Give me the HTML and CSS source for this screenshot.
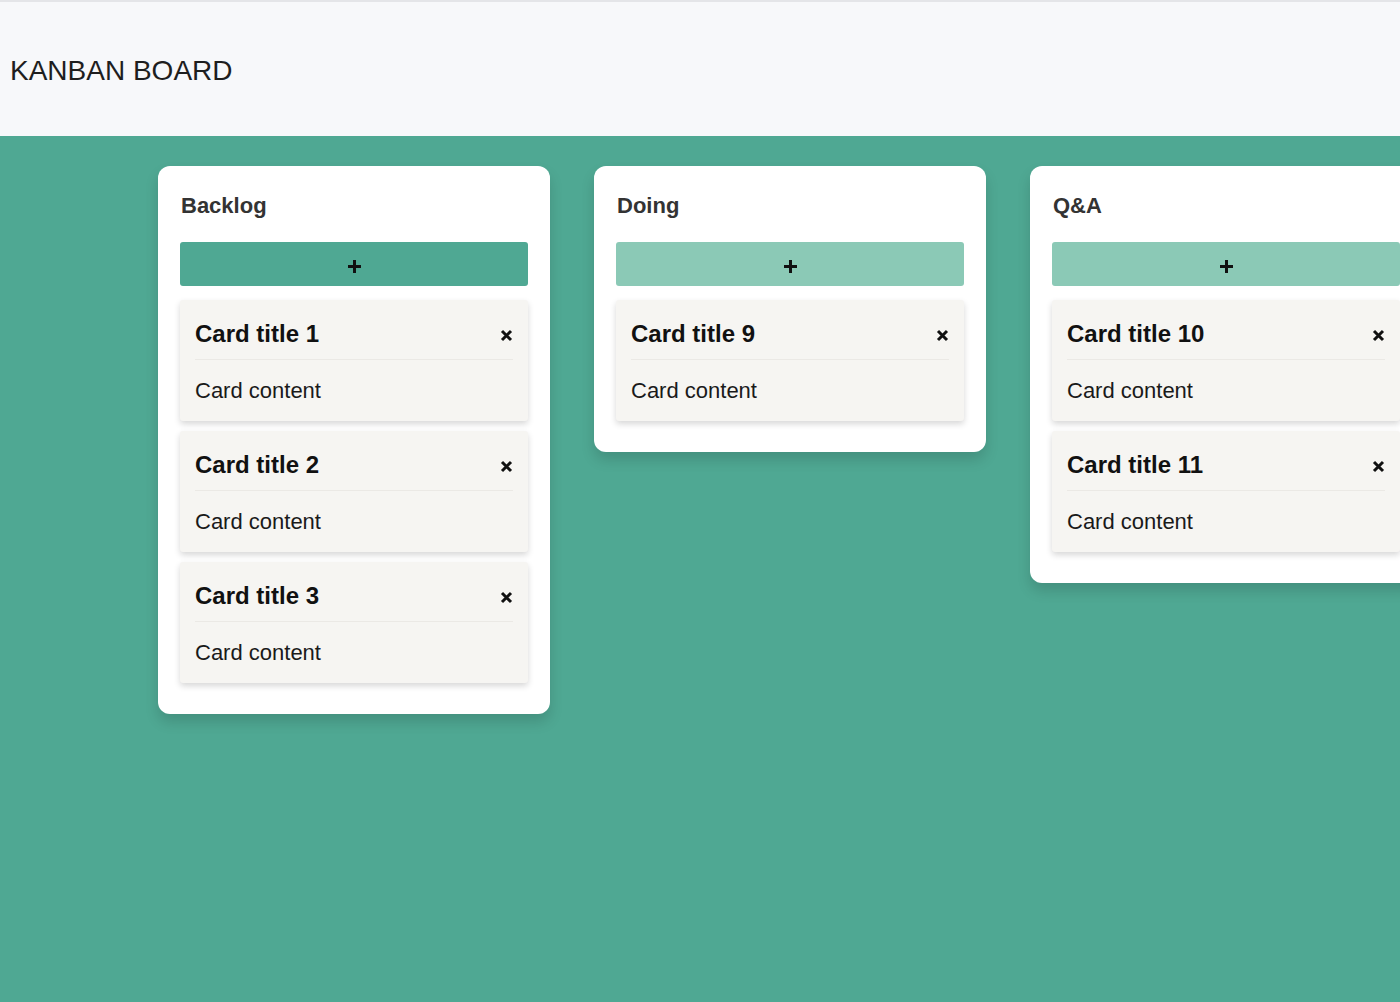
FILE: index.html
```html
<!DOCTYPE html>
<html lang="en">
<head>
<meta charset="utf-8">
<title>Kanban Board</title>
<link rel="stylesheet" href="styles.css">
</head>
<body>
<header class="topbar">
  <h1 class="brand">KANBAN BOARD</h1>
</header>
<main class="board">
  <section class="column">
    <h2 class="column-title">Backlog</h2>
    <button class="add-btn add-btn--active" aria-label="Add card"><svg class="plus" width="15" height="15" viewBox="0 0 15 15"><path d="M7.5 1v13M1 7.5h13" stroke="#111" stroke-width="3"/></svg></button>
    <div class="cards">
      <article class="card">
        <div class="card-head"><span class="card-title">Card title 1</span><svg class="close" width="13" height="13" viewBox="0 0 13 13"><path d="M2 2l9 9M11 2l-9 9" stroke="#111" stroke-width="3"/></svg></div>
        <p class="card-body">Card content</p>
      </article>
      <article class="card">
        <div class="card-head"><span class="card-title">Card title 2</span><svg class="close" width="13" height="13" viewBox="0 0 13 13"><path d="M2 2l9 9M11 2l-9 9" stroke="#111" stroke-width="3"/></svg></div>
        <p class="card-body">Card content</p>
      </article>
      <article class="card">
        <div class="card-head"><span class="card-title">Card title 3</span><svg class="close" width="13" height="13" viewBox="0 0 13 13"><path d="M2 2l9 9M11 2l-9 9" stroke="#111" stroke-width="3"/></svg></div>
        <p class="card-body">Card content</p>
      </article>
    </div>
  </section>
  <section class="column">
    <h2 class="column-title">Doing</h2>
    <button class="add-btn" aria-label="Add card"><svg class="plus" width="15" height="15" viewBox="0 0 15 15"><path d="M7.5 1v13M1 7.5h13" stroke="#111" stroke-width="3"/></svg></button>
    <div class="cards">
      <article class="card">
        <div class="card-head"><span class="card-title">Card title 9</span><svg class="close" width="13" height="13" viewBox="0 0 13 13"><path d="M2 2l9 9M11 2l-9 9" stroke="#111" stroke-width="3"/></svg></div>
        <p class="card-body">Card content</p>
      </article>
    </div>
  </section>
  <section class="column">
    <h2 class="column-title">Q&amp;A</h2>
    <button class="add-btn" aria-label="Add card"><svg class="plus" width="15" height="15" viewBox="0 0 15 15"><path d="M7.5 1v13M1 7.5h13" stroke="#111" stroke-width="3"/></svg></button>
    <div class="cards">
      <article class="card">
        <div class="card-head"><span class="card-title">Card title 10</span><svg class="close" width="13" height="13" viewBox="0 0 13 13"><path d="M2 2l9 9M11 2l-9 9" stroke="#111" stroke-width="3"/></svg></div>
        <p class="card-body">Card content</p>
      </article>
      <article class="card">
        <div class="card-head"><span class="card-title">Card title 11</span><svg class="close" width="13" height="13" viewBox="0 0 13 13"><path d="M2 2l9 9M11 2l-9 9" stroke="#111" stroke-width="3"/></svg></div>
        <p class="card-body">Card content</p>
      </article>
    </div>
  </section>
</main>
</body>
</html>
```
FILE: styles.css
```css
* { box-sizing: border-box; }

html, body {
  margin: 0;
  padding: 0;
  overflow: hidden;
}

body {
  font-family: "Liberation Sans", Arial, Helvetica, sans-serif;
  background: #4fa893;
}

.topbar {
  height: 136px;
  background: #f7f8fa;
  border-top: 2px solid #e4e5e8;
  display: flex;
  align-items: center;
  padding: 4px 0 0 10px;
}

.brand {
  margin: 0;
  font-size: 28px;
  font-weight: 400;
  color: #1e1e1e;
}

.board {
  display: flex;
  align-items: flex-start;
  gap: 44px;
  padding: 30px 0 0 158px;
  min-height: calc(100vh - 136px);
  background: #4fa893;
  overflow: hidden;
}

.column {
  flex: 0 0 392px;
  width: 392px;
  background: #ffffff;
  border-radius: 12px;
  padding: 22px 22px 21px;
  box-shadow: 0 8px 14px rgba(0, 0, 0, 0.14);
}

.column-title {
  margin: 5px 0 0 1px;
  height: 49px;
  font-size: 22px;
  line-height: 25px;
  font-weight: 700;
  color: #333333;
}

.add-btn {
  display: flex;
  align-items: center;
  justify-content: center;
  width: 100%;
  height: 44px;
  border: none;
  border-radius: 3px;
  background: #8bc9b6;
  padding: 0;
  margin: 0 0 14px;
  cursor: pointer;
}

.plus {
  margin-top: 4px;
}

.add-btn--active {
  background: #4fa893;
}

.cards {
  display: flex;
  flex-direction: column;
  gap: 10px;
}

.card {
  background: #f6f5f2;
  border-radius: 3px;
  padding: 0 15px;
  box-shadow: 0 3px 6px rgba(0, 0, 0, 0.16);
}

.cards .card:last-child {
  margin-bottom: 10px;
}

.card-head {
  display: flex;
  align-items: center;
  justify-content: space-between;
  padding: 20px 0 11px;
  border-bottom: 1px solid #ebe9e5;
}

.card-title {
  font-size: 24px;
  line-height: 28px;
  font-weight: 700;
  color: #111111;
}

.close {
  flex: 0 0 13px;
  margin-top: 3px;
}

.card-body {
  margin: 0;
  padding: 18px 0 18px;
  font-size: 22px;
  line-height: 25px;
  color: #1a1a1a;
}
```
